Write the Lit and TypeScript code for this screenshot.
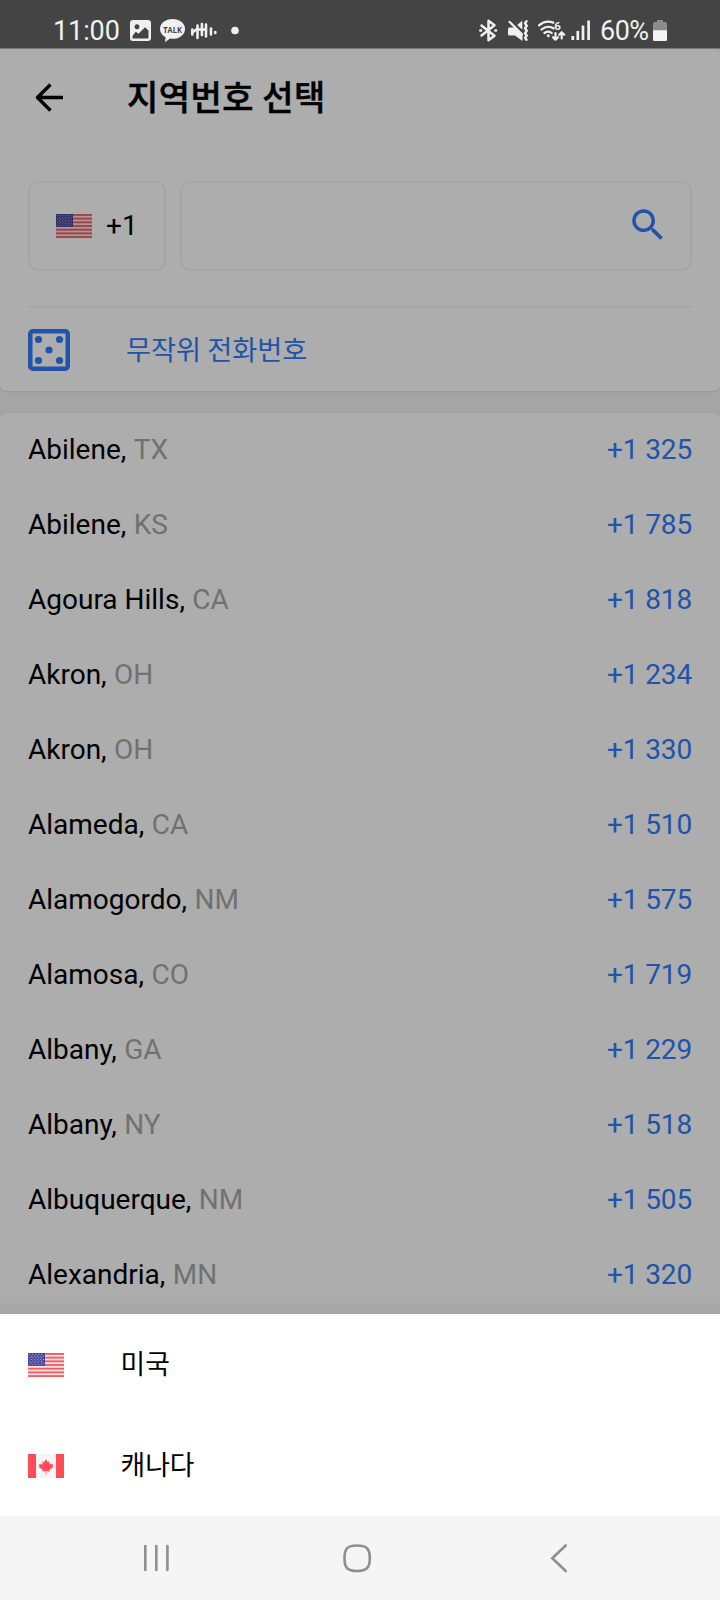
import { LitElement, html, css, svg } from "lit";
import { customElement, property } from "lit/decorators.js";

const CITIES: [string, string, string][] = [
  ["Abilene", "TX", "+1 325"],
  ["Abilene", "KS", "+1 785"],
  ["Agoura Hills", "CA", "+1 818"],
  ["Akron", "OH", "+1 234"],
  ["Akron", "OH", "+1 330"],
  ["Alameda", "CA", "+1 510"],
  ["Alamogordo", "NM", "+1 575"],
  ["Alamosa", "CO", "+1 719"],
  ["Albany", "GA", "+1 229"],
  ["Albany", "NY", "+1 518"],
  ["Albuquerque", "NM", "+1 505"],
  ["Alexandria", "MN", "+1 320"],
];

@customElement("country-flag")
class CountryFlag extends LitElement {
  @property() code = "us";

  static styles = css`
    :host { display: block; width: 36px; height: 24px; flex: none; }
    svg { display: block; }
  `;

  private us() {
    const h = 24 / 13;
    const stripes = Array.from({ length: 13 }, (_, i) => i);
    const rows = Array.from({ length: 7 }, (_, i) => i);
    const cols = Array.from({ length: 5 }, (_, i) => i);
    return svg`
      <rect width="36" height="24" fill="#fbdfe1"/>
      ${stripes.map((i) =>
        i % 2 === 0 ? svg`<rect y=${i * h} width="36" height=${h} fill="#ea5f69"/>` : null
      )}
      <rect width="17" height="12.9" fill="#46479a"/>
      ${rows.map((r) =>
        cols.map((c) => svg`<circle cx=${1.8 + c * 3 + (r % 2) * 1.5} cy=${1.6 + r * 1.62} r="0.55" fill="#c3c4e6"/>`)
      )}`;
  }

  private ca() {
    return svg`
      <rect width="36" height="24" fill="#f5f5f5"/>
      <rect width="8" height="24" fill="#ff4b55"/>
      <rect x="28" width="8" height="24" fill="#ff4b55"/>
      <path fill="#ff4b55" d="M18 5l1.700 3 1.900-.8-.5 3.600 1.600-1.500.5 1.100 1.900-.3-.6 2 .8.7-4 3.300.3 1.300-3.300-.5.1 3.600h-.8l.1-3.600-3.300.5.3-1.300-4-3.300.8-.7-.6-2 1.900.3.5-1.100 1.600 1.500-.5-3.600 1.900.8z"/>`;
  }

  render() {
    return html`<svg width="36" height="24" viewBox="0 0 36 24">${this.code === "us" ? this.us() : this.ca()}</svg>`;
  }
}

@customElement("status-bar")
class StatusBar extends LitElement {
  static styles = css`
    :host {
      display: flex; box-sizing: border-box; height: 49px; flex: none; padding: 13px 52px 0 53px;
      background: #444; color: #f0f0f0; justify-content: space-between;
      border-bottom: 1px solid #787878;
      font: 400 27px/35px Roboto, sans-serif;
    }
    .side { display: flex; height: 35px; align-items: center; }
    svg { display: block; flex: none; }
    .time { width: 77px; padding-top: 2px; letter-spacing: -0.1px; }
    .pct { width: 54px; margin-left: -1px; padding-top: 2px; letter-spacing: -0.5px; }
    .battery { margin-left: -1px; margin-right: 1px; }
    .talk { font: 700 9.500px "Open Sans", sans-serif; }
    .six { font: 700 11.500px Roboto, sans-serif; }
  `;

  render() {
    return html`
      <div class="side">
        <span class="time">11:00</span>
        <svg width="130" height="35" viewBox="130 13 130 35" fill="#f0f0f0">
          <path fill-rule="evenodd" d="M133 20h15a3 3 0 0 1 3 3v15a3 3 0 0 1-3 3h-15a3 3 0 0 1-3-3V23a3 3 0 0 1 3-3zm4 4.300a2.500 2.500 0 1 0 .01 0zM132.500 36v2.500h16v-8l-3.500-3.300-6.500 6.600-2.800-2z"/>
          <path d="M172.500 19c7 0 12.500 4.300 12.500 9.900s-5.500 9.900-12.500 9.900l-2.500-.2-5 3.600.6-4.900c-3.400-1.700-5.600-4.900-5.600-8.400C160 23.300 165.500 19 172.500 19z"/>
          <text class="talk" x="163.300" y="32.600" fill="#444" textLength="18.500" lengthAdjust="spacingAndGlyphs">TALK</text>
          <path fill="none" stroke="#f0f0f0" stroke-width="2.600" stroke-linecap="round" d="M192.300 29.500v5M197.500 25.500v12.500M201.900 24v11M206 24.500v12M211 28.500v6M215.300 32v1"/>
          <path fill="none" stroke="#f0f0f0" stroke-width="2.600" stroke-linejoin="round" d="M192.300 32.500l4-3h10"/>
          <circle cx="235" cy="30.500" r="3.800"/>
        </svg>
      </div>
      <div class="side">
        <svg width="123" height="35" viewBox="478 13 123 35" fill="#f0f0f0">
          <g fill="none" stroke="#f0f0f0" stroke-width="2.500" stroke-linejoin="round" stroke-linecap="round">
            <path d="M481.500 25.500l13 10.300-6 4.400V20.800l6 4.400-13 10.300"/>
            <path d="M480.300 30.500h.8M495.300 30.500h.8"/>
            <path stroke-width="2.200" d="M509.500 21.800l12.500 12.500"/>
            <path stroke-width="2.400" d="M526.500 21.300l-1.500 2 1.800 2.500-1.800 2.500 1.800 2.500-1.800 2.500 1.800 2.500-1.800 2 1.500 2"/>
            <path stroke-width="2.300" d="M539 25.300c4.500-3.800 9.800-4.300 14.300-2.600M541.500 29.500c3.600-3.200 8.500-3.500 12-1.200M544.500 33c2-1.700 5.300-1.700 7.200 0"/>
            <path stroke-width="2.200" d="M555.500 33v6.500M553 37.200l2.500 2.500 2.500-2.500M561.700 38.500v-6M559.200 34.700l2.500-2.500 2.500 2.500"/>
            <path stroke-width="2.700" stroke-linecap="butt" d="M572.800 36v4M577.800 31v9M583 25.500v14.500M588.600 20.500V40"/>
          </g>
          <path d="M508 29a1.500 1.500 0 0 1 1.500-1.500h4.500l8.500 7.500v6l-7.500-5.500h-5.500a1.500 1.500 0 0 1-1.500-1.500zM517.200 25l5.100-4.300v9z"/>
          <circle cx="548.300" cy="35.800" r="1.500"/>
          <text class="six" x="554.300" y="29.500">6</text>
        </svg>
        <span class="pct">60%</span>
        <svg class="battery" width="14" height="35" viewBox="653 13 14 35">
          <path fill="#8c8c8c" d="M657 20h6v2h2.500a1.500 1.500 0 0 1 1.500 1.500V31h-14v-7.500a1.500 1.500 0 0 1 1.500-1.500h2.500z"/>
          <path fill="#f4f4f4" d="M653 30.300h14v9.200a1.500 1.500 0 0 1-1.500 1.500h-11a1.500 1.500 0 0 1-1.500-1.500z"/>
        </svg>
      </div>`;
  }
}

@customElement("app-root")
class AppRoot extends LitElement {
  static styles = css`
    :host {
      display: flex; flex-direction: column; width: 720px; height: 1600px; overflow: hidden;
      background: #a5a5a5; color: #000;
      font: 400 28px/1 Roboto, "Noto Sans CJK KR", sans-serif;
    }
    * { box-sizing: border-box; }
    svg { display: block; flex: none; }
    .head {
      height: 342px; padding: 0 28px; background: #adadad; flex: none;
      border-radius: 0 6px 6px 6px; box-shadow: 0 1px 2px #969696;
    }
    .title { display: flex; align-items: center; height: 97px; }
    .back { margin-bottom: 2px; }
    h1 { margin: 0 0 4px 57px; font: 500 34px/50px "Noto Sans CJK KR", sans-serif; letter-spacing: 0.5px; white-space: nowrap; -webkit-text-stroke: 0.5px #000; }
    .fields { display: flex; gap: 14.5px; margin-top: 35px; height: 90px; }
    .code, .search { border: 2px solid #a5a5a5; border-radius: 10px; display: flex; align-items: center; }
    .code { width: 137.5px; padding-left: 26px; gap: 14px; }
    .search { flex: 1; justify-content: flex-end; padding: 0 21px 2px 0; }
    .dim { filter: brightness(0.68); }
    .random { margin-top: 35px; height: 85px; border-top: 2px solid #a5a5a5; display: flex; align-items: center; color: #2053a9; }
    .random span { margin: 0 0 4px 56px; font: 400 27.2px/40px "Noto Sans CJK KR", sans-serif; }
    .list { margin-top: 22px; flex: 1; background: linear-gradient(#adadad 880px, #a6a6a6); border-radius: 8px 8px 0 0; overflow: hidden; box-shadow: 0 0 2px #9c9c9c; }
    .row { display: flex; justify-content: space-between; align-items: center; height: 75px; padding: 0 28px 1px; }
    .state { color: #717171; margin-left: 0.5px; }
    .num { color: #2053a9; letter-spacing: -0.15px; }
    .sheet { flex: none; background: #fff; height: 202px; }
    .option { display: flex; align-items: center; height: 101px; padding: 0 28px; gap: 56.5px; font: 400 26.8px/38px "Noto Sans CJK KR", sans-serif; }
    .option span { margin-bottom: 3px; }
    .nav { flex: none; height: 84px; background: #f5f5f5; }
  `;

  render() {
    return html`
      <status-bar></status-bar>
      <section class="head">
        <div class="title">
          <svg class="back" width="42" height="42" viewBox="28 76 42 42" fill="none" stroke="#000" stroke-width="3.400" stroke-linejoin="round">
            <path d="M50.500 84.500L37.500 97.500l13 13M37.500 97.500H63"/>
          </svg>
          <h1>지역번호 선택</h1>
        </div>
        <div class="fields">
          <div class="code"><country-flag class="dim" code="us"></country-flag><span>+1</span></div>
          <div class="search">
            <svg width="42" height="42" viewBox="0 0 24 24" fill="#2053a9">
              <path d="M15.500 14h-.79l-.28-.27C15.410 12.590 16 11.110 16 9.500 16 5.910 13.090 3 9.500 3S3 5.910 3 9.500 5.910 16 9.500 16c1.610 0 3.090-.59 4.230-1.570l.27.28v.79l5 4.990L20.490 19l-4.990-5zm-6 0C7.010 14 5 11.990 5 9.500S7.010 5 9.500 5 14 7.010 14 9.500 11.990 14 9.500 14z"/>
            </svg>
          </div>
        </div>
        <div class="random">
          <svg width="42" height="42" viewBox="0 0 42 42" fill="#2053a9">
            <rect x="2.250" y="2.250" width="37.500" height="37.500" rx="2.500" fill="none" stroke="#2053a9" stroke-width="4.500"/>
            <circle cx="10.500" cy="10.500" r="3.600"/><circle cx="31.500" cy="10.500" r="3.600"/>
            <circle cx="21" cy="21" r="3.600"/>
            <circle cx="10.500" cy="31.500" r="3.600"/><circle cx="31.500" cy="31.500" r="3.600"/>
          </svg>
          <span>무작위 전화번호</span>
        </div>
      </section>
      <section class="list">
        ${CITIES.map(([city, state, num]) => html`
          <div class="row">
            <span>${city}, <span class="state">${state}</span></span>
            <span class="num">${num}</span>
          </div>`)}
      </section>
      <section class="sheet">
        <div class="option"><country-flag code="us"></country-flag><span>미국</span></div>
        <div class="option"><country-flag code="ca"></country-flag><span>캐나다</span></div>
      </section>
      <footer class="nav">
        <svg width="720" height="84" viewBox="0 1516 720 84" fill="none" stroke="#8f8f8f" stroke-width="2.600" stroke-linecap="round">
          <path d="M145.300 1546v24M156.300 1546v24M167.400 1546v24"/>
          <path d="M357 1545.500c9.500 0 12.800 3 12.800 12.700S366.500 1571 357 1571s-12.500-3-12.500-12.800 3-12.700 12.500-12.700z"/>
          <path d="M565.700 1545.500L552.300 1558.300l13.400 12.700"/>
        </svg>
      </footer>`;
  }
}
